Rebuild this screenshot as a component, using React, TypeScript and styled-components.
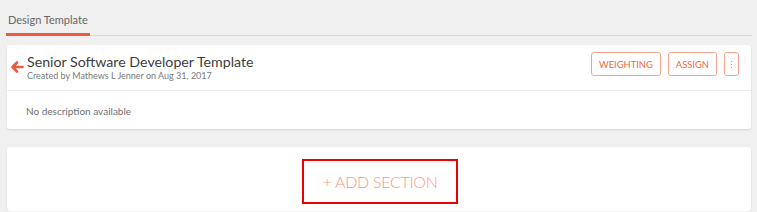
import styled, { createGlobalStyle } from "styled-components";

const GlobalStyle = createGlobalStyle`
  html, body {
    margin: 0;
    padding: 0;
    background: #f0f0f0;
    font-family: Lato, "Open Sans", sans-serif;
  }
`;

const Page = styled.div`
  padding: 0 5px 0 6px;
  display: flex;
  flex-direction: column;
`;

const TabBar = styled.div`
  height: 36px;
  display: flex;
  align-items: flex-end;
  border-bottom: 1px solid #d9d9d9;
  box-sizing: border-box;
`;

const Tab = styled.div<{ active?: boolean }>`
  font-size: 11px;
  color: #666;
  padding: 0 2px 7px 2px;
  margin-bottom: -1px;
  border-bottom: 3px solid ${({ active }) => (active ? "#f05a3c" : "transparent")};
`;

const Card = styled.div`
  margin: 9px 1px 0 1px;
  background: #fff;
  border-radius: 3px;
  box-shadow: 0 1px 2px rgba(0, 0, 0, 0.12);
`;

const Header = styled.div`
  height: 46px;
  display: flex;
  align-items: center;
  padding: 0 12px 0 3px;
  border-bottom: 1px solid #ececec;
  box-sizing: border-box;
`;

const BackArrow = styled.svg`
  width: 14px;
  height: 14px;
  margin-right: 3px;
  margin-top: -2px;
  flex-shrink: 0;
`;

const TitleBlock = styled.div`
  flex: 1;
  display: flex;
  flex-direction: column;
  margin-top: -1px;
`;

const Title = styled.div`
  font-size: 14.2px;
  line-height: 17px;
  color: #3d3d3d;
`;

const Subtitle = styled.div`
  font-size: 9px;
  line-height: 11px;
  color: #7a7a7a;
`;

const Actions = styled.div`
  display: flex;
  gap: 7px;
  align-self: flex-start;
  margin-top: 7px;
`;

const OutlineButton = styled.button<{ narrow?: boolean }>`
  height: 24px;
  padding: 0 ${({ narrow }) => (narrow ? "0" : "7px")};
  width: ${({ narrow }) => (narrow ? "15px" : "auto")};
  background: #fff;
  border: 1px solid #f3a48e;
  border-radius: 3px;
  color: #f0653f;
  font-family: Lato, sans-serif;
  font-size: 9.4px;
  display: flex;
  align-items: center;
  justify-content: center;
`;

const Description = styled.div`
  height: 38px;
  display: flex;
  align-items: center;
  padding-left: 19px;
  padding-top: 2px;
  box-sizing: border-box;
  font-size: 10px;
  color: #707070;
`;

const SectionCard = styled(Card)`
  margin-top: 18px;
  height: 64px;
  display: flex;
  align-items: center;
  justify-content: center;
`;

const AddSection = styled.div`
  width: 156px;
  height: 45px;
  box-sizing: border-box;
  border: 2px solid #f00000;
  display: flex;
  align-items: center;
  justify-content: center;
  font-size: 16px;
  font-weight: 300;
  color: #f59a80;
  letter-spacing: -0.3px;
  margin-left: 2px;
  margin-top: 5px;
`;

export default function App() {
  return (
    <>
      <GlobalStyle />
      <Page>
        <TabBar>
          <Tab active>Design Template</Tab>
        </TabBar>
        <Card>
          <Header>
            <BackArrow viewBox="0 0 14 14">
              <path
                d="M12.5 7H3M7 2.5L2.5 7L7 11.5"
                fill="none"
                stroke="#f05a3c"
                strokeWidth="2.6"
                strokeLinecap="round"
                strokeLinejoin="round"
              />
            </BackArrow>
            <TitleBlock>
              <Title>Senior Software Developer Template</Title>
              <Subtitle>Created by Mathews L Jenner on Aug 31, 2017</Subtitle>
            </TitleBlock>
            <Actions>
              <OutlineButton>WEIGHTING</OutlineButton>
              <OutlineButton>ASSIGN</OutlineButton>
              <OutlineButton narrow>⋮</OutlineButton>
            </Actions>
          </Header>
          <Description>No description available</Description>
        </Card>
        <SectionCard>
          <AddSection>+ ADD SECTION</AddSection>
        </SectionCard>
      </Page>
    </>
  );
}
